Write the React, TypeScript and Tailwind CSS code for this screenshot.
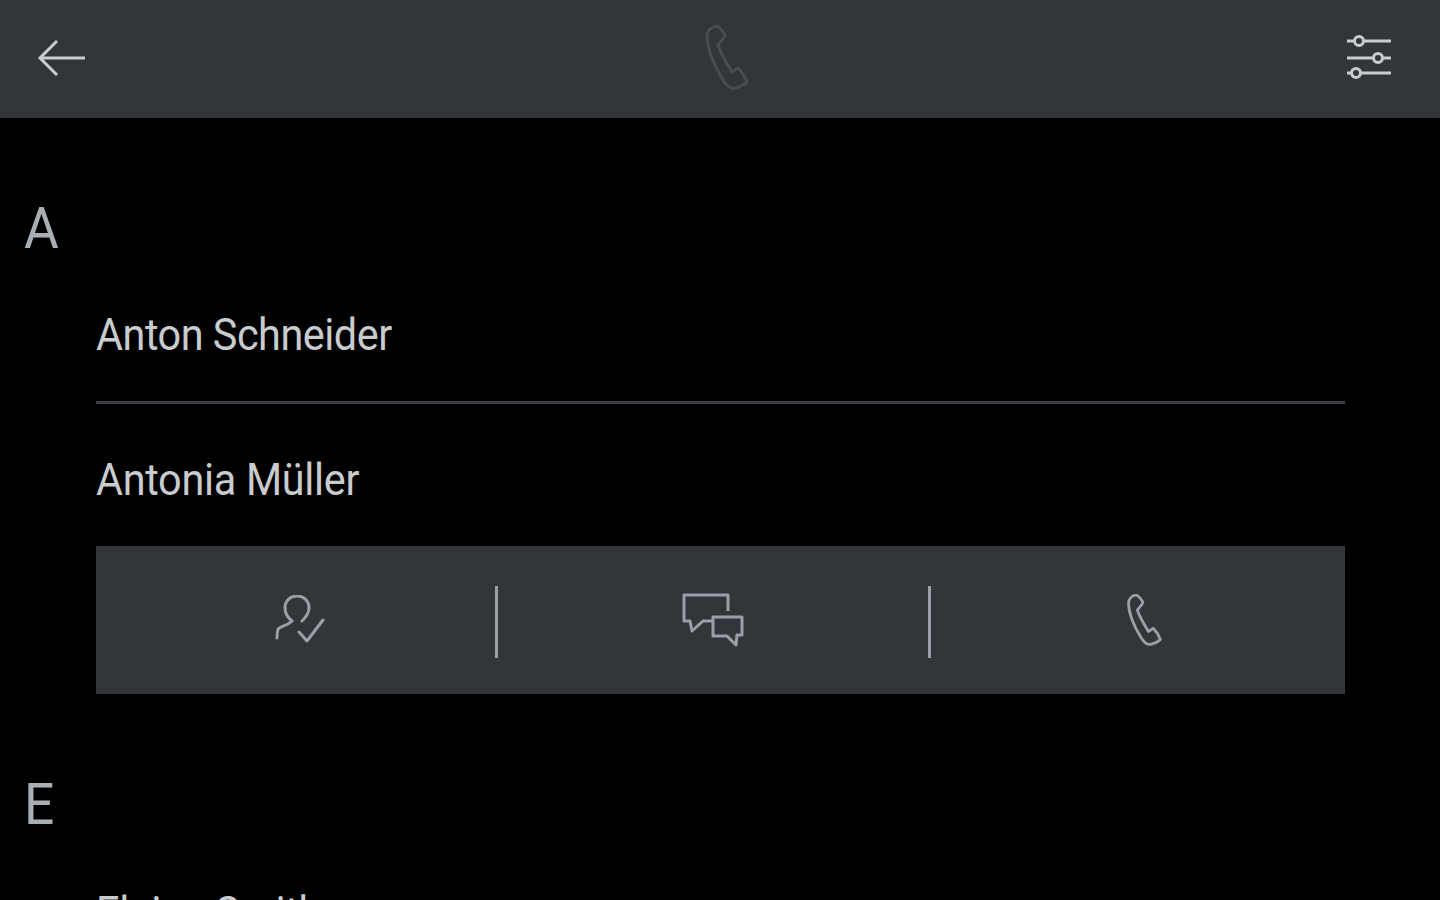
import React from "react";

function PhoneIcon({ className, sw }: { className: string; sw: number }) {
  return (
    <svg viewBox="0 0 44 65" fill="none" className={className} stroke="currentColor" strokeWidth={sw} strokeLinejoin="round">
      <path d="M12 1 C6 2 2 6 2 11 C2 24 10 42 18 55 C21 60 25 64 30 63 C35 62 39 60 42 57 C40 52 37 47 33 43 C31 44 29 46 27 47 C22 39 16 29 13 20 C15 17 19 14 20 10 C18 6 15 3 12 1Z" />
    </svg>
  );
}

function Divider() {
  return <div className="w-[3px] h-[72px] mt-[4px] bg-[#9aa0a5] shrink-0" />;
}

export default function App() {
  return (
    <div className="w-[1440px] h-[900px] overflow-hidden bg-black font-[Roboto,sans-serif] font-normal">
      <header className="h-[118px] bg-[#30363a] flex items-center justify-between pl-[37px] pr-[49px]">
        <svg viewBox="0 0 50 38" fill="none" stroke="#c9cdcf" strokeWidth="3" className="w-[50px] h-[38px] mb-[2px]">
          <path d="M20 2 L3 19 L20 36 M3 19 H48" />
        </svg>
        <PhoneIcon className="w-[44px] h-[65px] text-[#484d52] ml-[20px] mb-[3px]" sw={3} />
        <svg viewBox="0 0 44 44" fill="none" stroke="#c9cdcf" strokeWidth="3" className="w-[44px] h-[44px] mb-[4px]">
          <path d="M0 6 H44 M0 23 H44 M0 38 H44" />
          <circle cx="12" cy="6" r="4.5" fill="#30363a" />
          <circle cx="31" cy="23" r="4.5" fill="#30363a" />
          <circle cx="9" cy="38" r="4.5" fill="#30363a" />
        </svg>
      </header>

      <main className="pl-[24px] pr-[95px]">
        <div className="h-[145px] pt-[62px] text-[58px] leading-[96px] text-[#a9aeb3] origin-left scale-x-[0.92]">A</div>
        <div className="ml-[72px]">
          <div className="h-[141px] pt-[50px] border-b-[3px] border-[#3c4044] text-[44px] leading-[44px] text-[#c9ccce]">
            <span className="inline-block origin-left scale-x-[0.94] tracking-[-0.5px]">Anton Schneider</span>
          </div>
          <div className="h-[142px] pt-[54px] text-[44px] leading-[44px] text-[#c9ccce]">
            <span className="inline-block origin-left scale-x-[0.94] tracking-[-0.3px]">Antonia Müller</span>
          </div>
          <div className="h-[148px] bg-[#30363a] flex items-center">
            <div className="w-[399px] flex justify-center items-center pl-[8px]">
              <svg viewBox="0 0 50 50" fill="none" stroke="#9aa0a5" strokeWidth="3" strokeLinecap="round" strokeLinejoin="round" className="w-[50px] h-[50px]">
                <path d="M17 26 C12 22 10 18 10 13 C10 6 15 1 22 1 C29 1 34 6 34 13 C34 18 31 22 27 26 M17 26 C13 30 8 31 4 33 C2 35 2 38 2 43 M24 37 L32 46 L48 25" />
              </svg>
            </div>
            <Divider />
            <div className="w-[430px] flex justify-center items-center">
              <svg viewBox="0 0 62 54" fill="none" stroke="#9aa0a5" strokeWidth="3" strokeLinejoin="round" className="w-[62px] h-[54px]">
                <path d="M46 18 V2 H2 V28 H8 L10 38 L21 28 H30" />
                <path d="M31 24 H60 V42 H55 L54 52 L45 43 H31 Z" />
              </svg>
            </div>
            <Divider />
            <div className="flex-1 flex justify-center items-center pl-[13px]">
              <PhoneIcon className="w-[35px] h-[52px] text-[#9aa0a5]" sw={3.5} />
            </div>
          </div>
        </div>
        <div className="h-[144px] pt-[62px] text-[58px] leading-[96px] text-[#a9aeb3] origin-left scale-x-[0.92]">E</div>
        <div className="ml-[72px] mt-[53px] text-[44px] leading-[44px] text-[#c9ccce]">
          <span className="inline-block origin-left scale-x-[0.94] tracking-[-0.3px]">Elaine Smith</span>
        </div>
      </main>
    </div>
  );
}
